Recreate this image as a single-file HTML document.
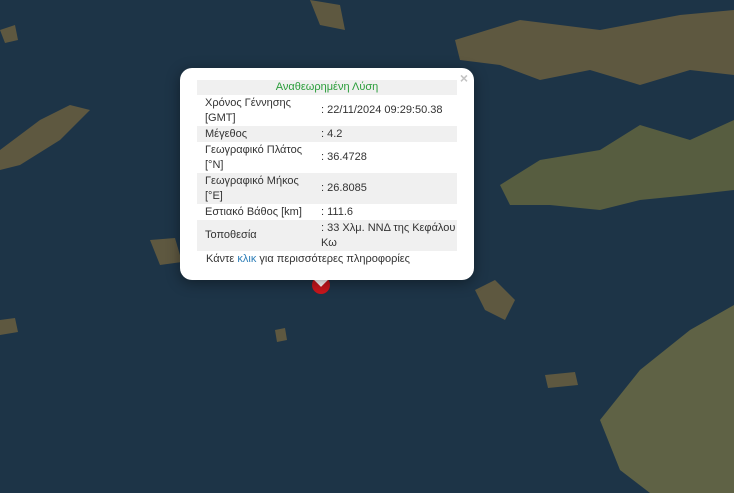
<!DOCTYPE html>
<html><head><meta charset="utf-8"><style>
body{margin:0;width:734px;height:493px;overflow:hidden;background:#1d3447;font-family:"Liberation Sans","DejaVu Sans",sans-serif;position:relative}
svg.map{position:absolute;left:0;top:0}
.pop{position:absolute;left:180px;top:68px;width:294px;height:212px;background:#fff;border-radius:12px;box-shadow:0 3px 14px rgba(0,0,0,.4)}
.arrow{position:absolute;left:314px;top:270px;width:14px;height:14px;background:#fff;transform:rotate(45deg)}
.x{position:absolute;right:6px;top:2px;color:#c3c3c3;font:bold 14px "Liberation Sans",sans-serif}
table{position:absolute;left:17px;top:12px;width:260px;border-collapse:collapse;font-size:11px;color:#333;table-layout:fixed}
td{padding:0 0 0 8px;line-height:15px;vertical-align:middle}
td.k{width:116px}
tr.g td{background:#f0f0f0}
td.v{padding-left:0;white-space:nowrap}
.h td{text-align:center;color:#2a9d3a;height:15px;padding:0}
.f{position:absolute;left:26px;top:185px;font-size:11px;color:#333}
.f span{color:#2f7fb8}
.tip{position:absolute;left:312px;top:276px;width:18px;height:18px;border-radius:50%;background:#c8161c}
</style></head><body>
<svg class="map" width="734" height="493">
<g fill="#5e5840">
<path d="M455 40 L520 20 L600 30 L680 15 L734 10 L734 75 L690 70 L640 85 L590 70 L540 80 L500 65 L460 60Z"/>
<path d="M500 185 L540 160 L600 150 L640 125 L690 140 L734 120 L734 190 L690 195 L640 200 L600 210 L550 205 L510 205Z" fill="#575d40"/>
<path d="M600 420 L640 370 L690 330 L734 305 L734 493 L650 493 L620 470Z" fill="#5f6245"/>
<path d="M0 150 L40 120 L70 105 L90 110 L60 140 L20 165 L0 170Z"/>
<path d="M150 240 L175 238 L182 262 L160 265Z"/>
<path d="M475 290 L495 280 L515 300 L505 320 L485 310Z"/>
<path d="M310 0 L340 5 L345 30 L320 25Z"/>
<path d="M545 375 L575 372 L578 385 L548 388Z"/>
<path d="M0 320 L15 318 L18 332 L0 335Z"/>
<path d="M0 30 L15 25 L18 40 L5 43Z"/>
<path d="M275 330 L285 328 L287 340 L277 342Z"/>
</g>
</svg>
<div class="tip"></div>
<div class="arrow"></div>
<div class="pop"><div class="x">×</div>
<table>
<colgroup><col style="width:124px"><col style="width:136px"></colgroup>
<tr class="g h"><td colspan="2">Αναθεωρημένη Λύση</td></tr>
<tr><td style="height:31px">Χρόνος Γέννησης<br>[GMT]</td><td class="v">: 22/11/2024 09:29:50.38</td></tr>
<tr class="g"><td style="height:16px">Μέγεθος</td><td class="v">: 4.2</td></tr>
<tr><td style="height:31px">Γεωγραφικό Πλάτος<br>[°N]</td><td class="v">: 36.4728</td></tr>
<tr class="g"><td style="height:31px">Γεωγραφικό Μήκος<br>[°E]</td><td class="v">: 26.8085</td></tr>
<tr><td style="height:16px">Εστιακό Βάθος [km]</td><td class="v">: 111.6</td></tr>
<tr class="g"><td style="height:31px">Τοποθεσία</td><td class="v">: 33 Χλμ. ΝΝΔ της Κεφάλου<br>Κω</td></tr>
</table>
<div class="f">Κάντε <span>κλικ</span> για περισσότερες πληροφορίες</div>
</div>
</body></html>
